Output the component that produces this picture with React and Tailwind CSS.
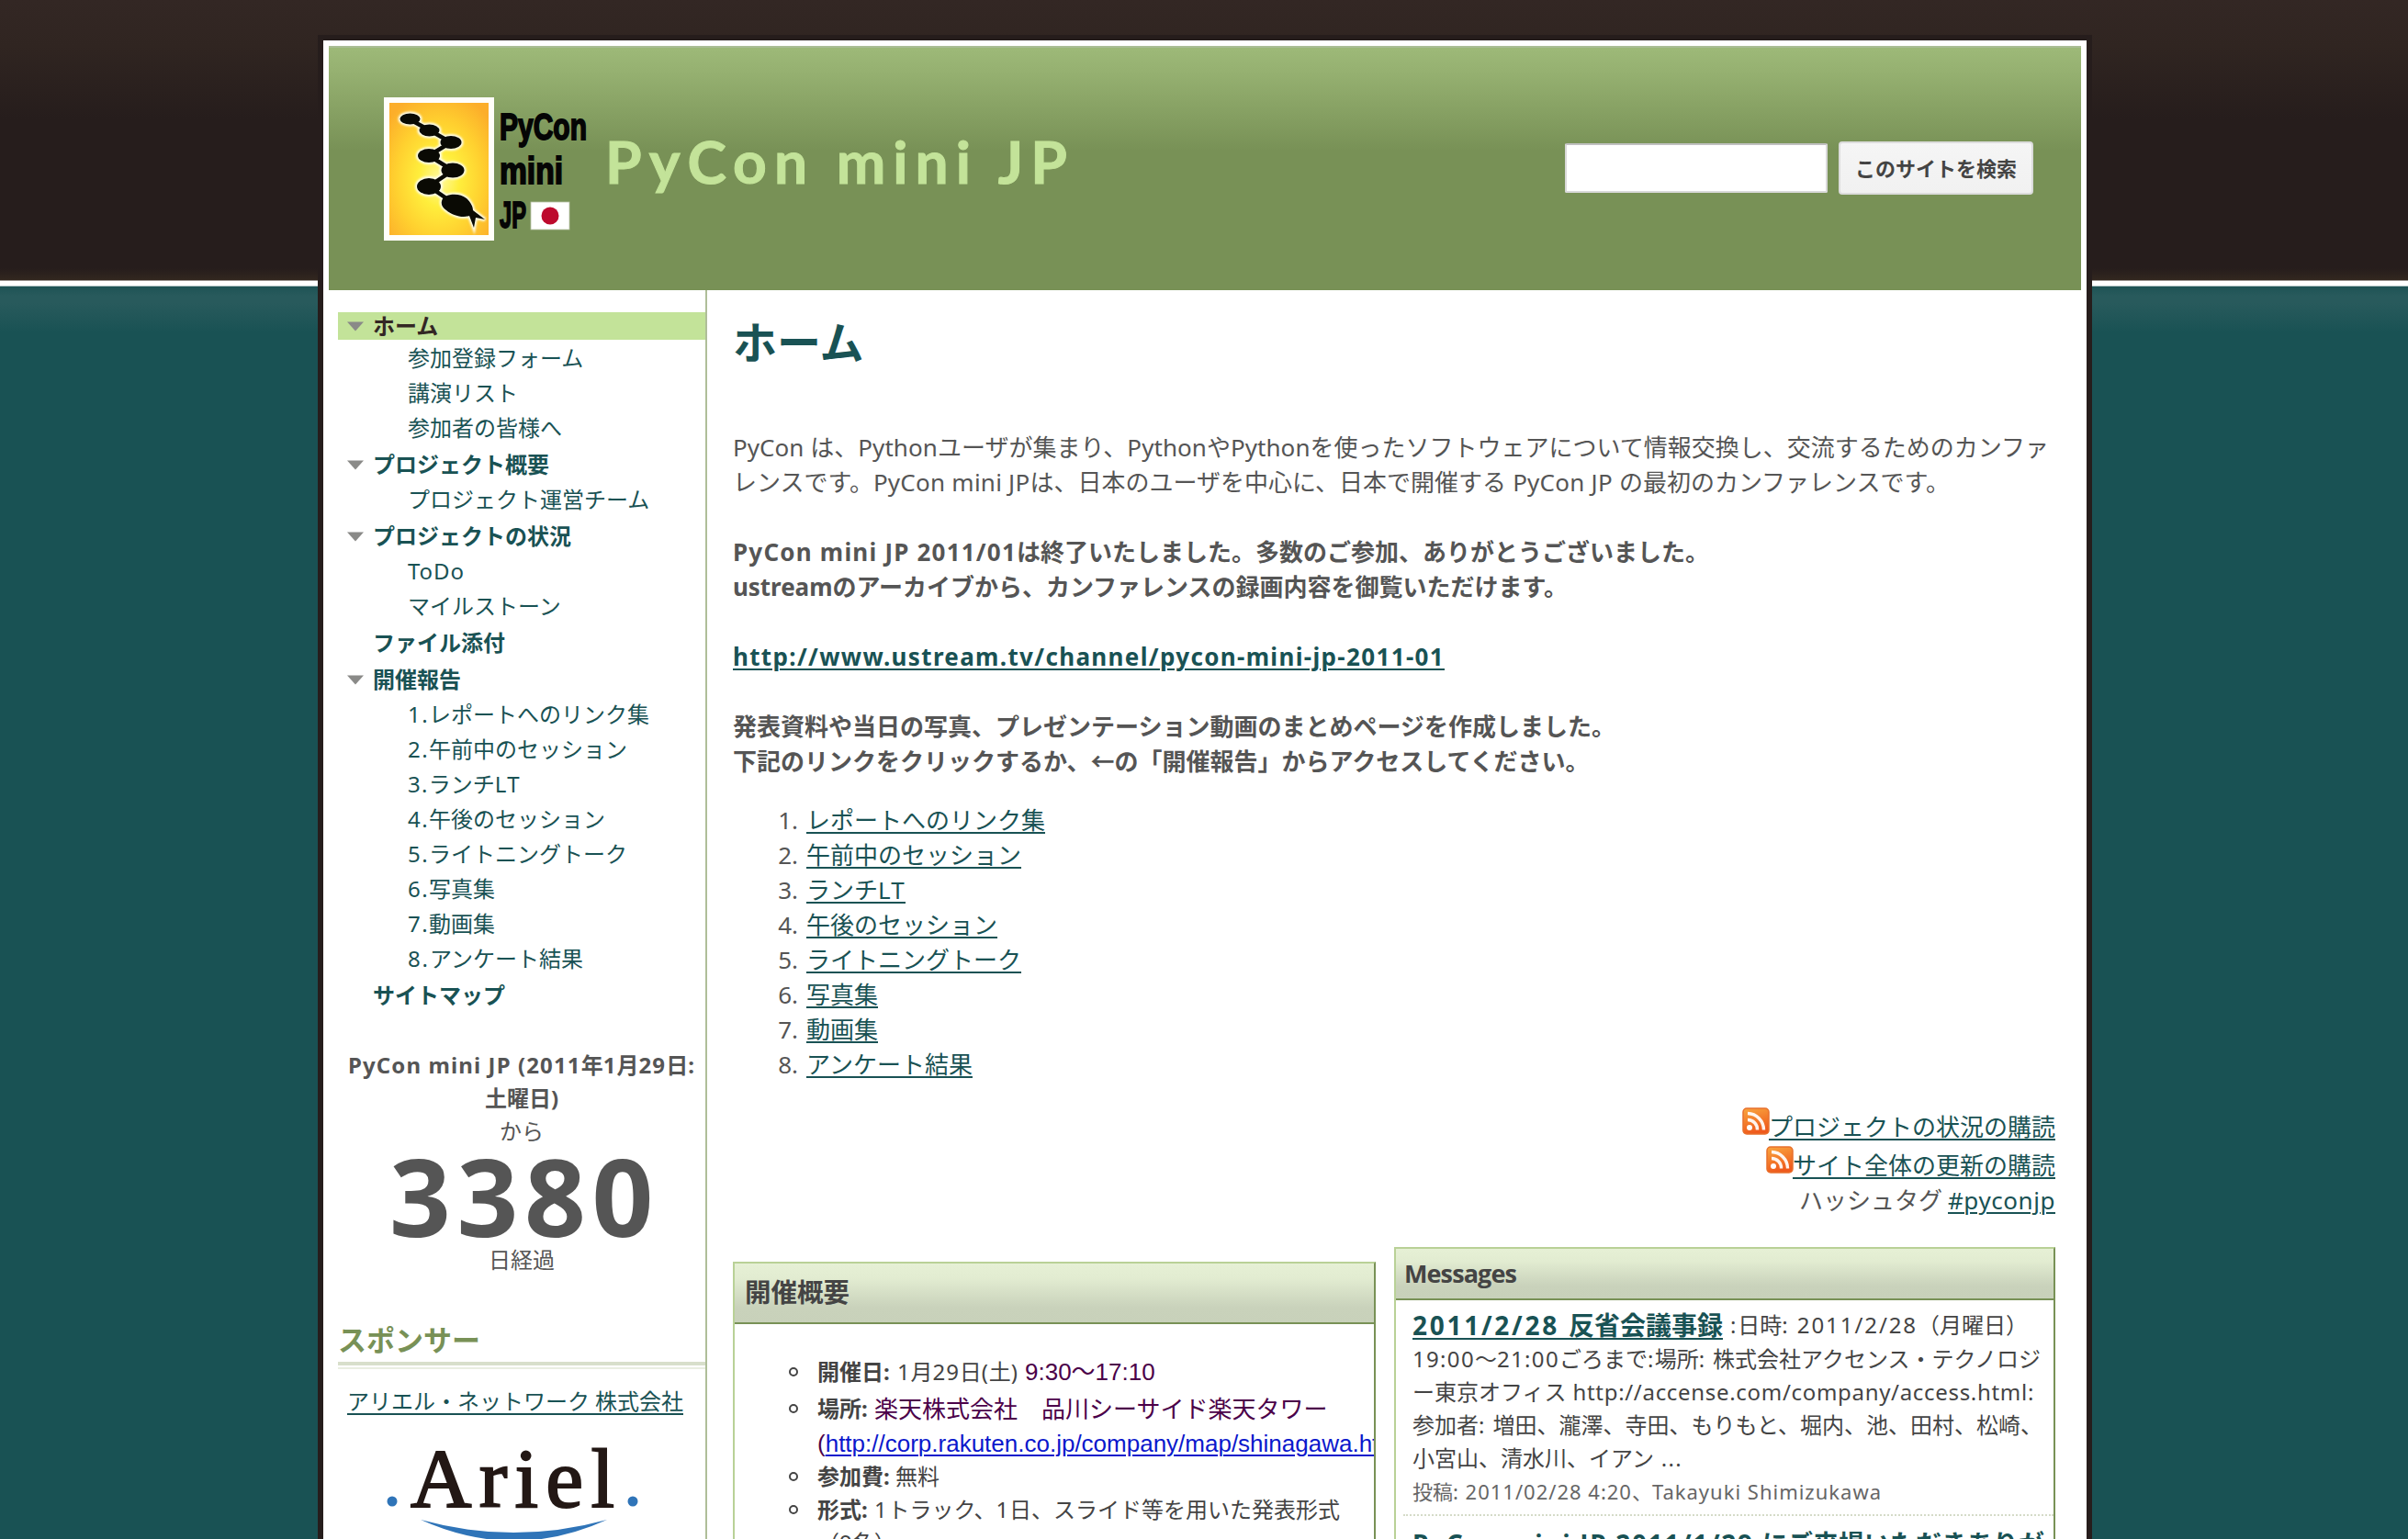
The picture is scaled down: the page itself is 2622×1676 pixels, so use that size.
import React, { useLayoutEffect, useRef, useState } from "react";

// A single line of text; with `w`, its Latin runs are tracked so the line takes that width.
function T({ w, className = "", children }) {
  const ref = useRef(null);
  const [ls, setLs] = useState(0);
  const text = String(children);
  const parts = text.split(/([\x20-\x7e]+)/).filter(Boolean);
  const isLatin = (s) => /^[\x20-\x7e]+$/.test(s);
  useLayoutEffect(() => {
    if (!w) return;
    const n = parts.filter(isLatin).join("").length;
    if (n) setLs((w - ref.current.getBoundingClientRect().width) / n);
  }, []);
  return (
    <span ref={ref} className={"whitespace-pre " + className}>
      {parts.map((p, i) =>
        isLatin(p) ? (
          <span key={i} style={{ letterSpacing: ls + "px" }}>{p}</span>
        ) : (
          <span key={i}>{p}</span>
        )
      )}
    </span>
  );
}

const NAV = [
  { t: "ホーム", active: true, open: true, kids: [["参加登録フォーム"], ["講演リスト"], ["参加者の皆様へ"]] },
  { t: "プロジェクト概要", open: true, kids: [["プロジェクト運営チーム"]] },
  { t: "プロジェクトの状況", open: true, kids: [["ToDo", 62], ["マイルストーン"]] },
  { t: "ファイル添付", kids: [] },
  {
    t: "開催報告",
    open: true,
    kids: [
      ["1.レポートへのリンク集", 263],
      ["2.午前中のセッション", 239],
      ["3.ランチLT", 123],
      ["4.午後のセッション", 215],
      ["5.ライトニングトーク", 239],
      ["6.写真集", 95],
      ["7.動画集", 95],
      ["8.アンケート結果", 191],
    ],
  },
  { t: "サイトマップ", kids: [] },
];

const LINKS = [
  "レポートへのリンク集",
  "午前中のセッション",
  "ランチLT",
  "午後のセッション",
  "ライトニングトーク",
  "写真集",
  "動画集",
  "アンケート結果",
];

const LINK = "text-[#195254] underline decoration-2 underline-offset-[3px]";

function Logo() {
  return (
    <svg className="ml-[60px] mt-[52px] h-[160px] w-[236px] shrink-0" viewBox="418 104 236 160">
      <defs>
        <radialGradient id="sun" cx="0.5" cy="0.58" r="0.68">
          <stop offset="0" stopColor="#fffaa0" />
          <stop offset="0.3" stopColor="#ffee3c" />
          <stop offset="0.65" stopColor="#ffd02f" />
          <stop offset="1" stopColor="#fcae2a" />
        </radialGradient>
        <filter id="glow" x="-20%" y="-20%" width="140%" height="140%">
          <feGaussianBlur stdDeviation="1.1" />
        </filter>
      </defs>
      <rect x="418" y="106" width="120" height="156" fill="#fffefa" />
      <rect x="424" y="112" width="108" height="144" fill="url(#sun)" />
      <g filter="url(#glow)" fill="#fffef0" stroke="#fffef0" strokeWidth="4">
        <SnakeShape line="#fffef0" lineWidth={8} />
      </g>
      <g fill="#0a0a04">
        <SnakeShape line="#0a0a04" lineWidth={4.5} />
      </g>
      <g fontFamily="'Liberation Sans'" fontWeight="700" fill="#050505" stroke="#050505" strokeWidth="1.8">
        <text x="544" y="152" fontSize="40" textLength="95" lengthAdjust="spacingAndGlyphs">PyCon</text>
        <text x="544" y="199.500" fontSize="40" textLength="69" lengthAdjust="spacingAndGlyphs">mini</text>
        <text x="544" y="247.500" fontSize="41" textLength="29" lengthAdjust="spacingAndGlyphs">JP</text>
      </g>
      <rect x="578" y="220" width="42" height="30" fill="#fff" stroke="#b9c4a8" strokeWidth="0.8" />
      <circle cx="599" cy="235" r="9.500" fill="#bd0a2d" />
    </svg>
  );
}

function SnakeShape({ line, lineWidth }) {
  return (
    <>
      <path
        d="M446 130 L468 142 L491 155 L467 169.500 L493 185.500 L467 203 L492 220"
        fill="none"
        stroke={line}
        strokeWidth={lineWidth}
      />
      <ellipse cx="446.500" cy="129.500" rx="11" ry="6" />
      <ellipse cx="467.500" cy="142" rx="11" ry="6.500" />
      <ellipse cx="491" cy="155" rx="11.500" ry="7" />
      <ellipse cx="467" cy="169.500" rx="12" ry="7.500" />
      <ellipse cx="493" cy="185.500" rx="12.500" ry="8" />
      <ellipse cx="467" cy="203" rx="13" ry="9" />
      <path d="M481 219 C482 211 500 209 508 216 C513 221 515 225 515 229 L528 239 L518 237 L516 248 L511 235 C503 238 492 234 486 229 C482 226 480 223 481 219 Z" />
    </>
  );
}

function Rss() {
  return (
    <svg className="-mt-[13px] mr-[-1px] h-[30px] w-[30px]" viewBox="0 0 30 30">
      <defs>
        <linearGradient id="rss" x1="0" y1="0" x2="0.300" y2="1">
          <stop offset="0" stopColor="#f9a63e" />
          <stop offset="1" stopColor="#ef5a1c" />
        </linearGradient>
      </defs>
      <rect x="1" y="1" width="28" height="28" rx="4" fill="url(#rss)" stroke="#e8702c" strokeWidth="1.500" />
      <circle cx="8" cy="22" r="3" fill="#fff" />
      <path d="M6 13.500 A10.500 10.500 0 0 1 16.500 24.500 M6 6.500 A18 18 0 0 1 23.500 24.500" fill="none" stroke="#fff" strokeWidth="3.400" opacity="0.920" />
    </svg>
  );
}

function Sidebar() {
  return (
    <aside className="h-[1360px] w-[412px] shrink-0 border-r-2 border-[#afbe99] pl-[10px] pt-6">
      <ul>
        {NAV.map((n) => (
          <li key={n.t}>
            <div
              className={
                "flex items-center pl-[10px] text-[24px] font-bold " +
                (n.active ? "mb-[2px] h-[30px] bg-[#c3e399] text-[#332724]" : "h-10 text-[#195254]")
              }
            >
              <div className="w-7">
                {n.open && (
                  <svg className="h-[11px] w-[18px]" viewBox="0 0 18 11">
                    <path d="M0 0.500 H18 L9 10.500 Z" fill="#8a8a88" />
                  </svg>
                )}
              </div>
              <T>{n.t}</T>
            </div>
            {n.kids.map(([k, w]) => (
              <div key={k} className="flex h-[38px] items-center pb-[2px] pl-[76px] text-[24px] text-[#195254]">
                <T w={w}>{k}</T>
              </div>
            ))}
          </li>
        ))}
      </ul>

      <div className="mt-[38px] flex w-[400px] flex-col items-center text-[24px] leading-9">
        <T w={378} className="font-bold">PyCon mini JP (2011年1月29日:</T>
        <T className="font-bold">土曜日)</T>
        <T>から</T>
        <div className="flex h-[104px] items-center pb-[2px] pl-[6px] text-[117px] font-bold leading-none">
          <T w={294}>3380</T>
        </div>
        <T>日経過</T>
      </div>

      <h2 className="mt-[45px] flex h-[48px] items-center text-[31px] font-bold text-[#789156]">スポンサー</h2>
      <div className="h-[8px] bg-[linear-gradient(to_bottom,#d8dfcb_0,#d8dfcb_4px,#fff_4px,#fff_6px,#e9eee1_6px,#e9eee1_8px)]" />
      <div className="mt-[17px] flex h-9 items-center pl-[10px] text-[24px]">
        <T w={366} className={LINK + " underline-offset-[4px]"}>アリエル・ネットワーク 株式会社</T>
      </div>
      <svg className="h-[133px] w-[400px]" viewBox="368 1543 400 133">
        <text x="447" y="1639.500" fontFamily="'Liberation Serif'" fontSize="92" fill="#231815" stroke="#231815" strokeWidth="2" textLength="222">Ariel</text>
        <circle cx="427" cy="1634" r="5.500" fill="#2f74b8" />
        <circle cx="689" cy="1634" r="5.500" fill="#2f74b8" />
        <path d="M458 1654 Q559 1682 661 1654 Q560 1700 458 1654 Z" fill="#2f74b8" />
      </svg>
    </aside>
  );
}

function Bullet({ className, children }) {
  return (
    <li className={"flex items-center " + className}>
      <div className="mr-[21px] h-[10px] w-[10px] rounded-full border-2 border-[#444]" />
      {children}
    </li>
  );
}

const BOX = "overflow-hidden border-2 border-b-0 border-l-[#b9d197] border-r-[#789156] border-t-[#b9d197] text-[#444]";
const BOX_HEAD =
  "flex items-center border-b-2 border-[#789156] font-bold bg-[linear-gradient(to_bottom,#e6f0d5_0,#e2ecd1_25%,#c9d2bb_75%,#c8d1ba_100%)]";

function Overview() {
  return (
    <section className={BOX + " mt-4 h-[304px] w-[700px]"}>
      <h3 className={BOX_HEAD + " h-[66px] pb-[2px] pl-[11px] text-[28.500px]"}>開催概要</h3>
      <ul className="w-[1000px] pl-[59px] pt-[32px] text-[24px]">
        <Bullet className="h-10">
          <T w={87} className="font-bold">開催日: </T>
          <T w={139}>1月29日(土) </T>
          <span className="font-['Liberation_Sans','Noto_Sans_CJK_JP',sans-serif] text-[26px] text-[#4b0049]">9:30〜17:10</span>
        </Bullet>
        <Bullet className="h-10">
          <T w={62} className="font-bold">場所: </T>
          <span className="text-[26px] text-[#4b0049]">楽天株式会社　品川シーサイド楽天タワー</span>
        </Bullet>
        <li className="flex h-[36px] items-center pl-[31px] font-['Liberation_Sans'] text-[26px] text-[#4b0049]">
          (<a className="text-[#0b18cc] underline decoration-2 underline-offset-[3px]">http://corp.rakuten.co.jp/company/map/shinagawa.html</a>)
        </li>
        <Bullet className="h-9">
          <T w={85} className="font-bold">参加費: </T>
          <T>無料</T>
        </Bullet>
        <Bullet className="h-9">
          <T w={62} className="font-bold">形式: </T>
          <T w={507}>1トラック、1日、スライド等を用いた発表形式</T>
        </Bullet>
        <li className="flex h-9 items-center pl-[31px]">（9名）</li>
      </ul>
    </section>
  );
}

function Messages() {
  return (
    <section className={BOX + " h-[320px] w-[720px]"}>
      <h3 className={BOX_HEAD + " h-[56px] pl-[9px] font-['Open_Sans'] text-[27px]"}>
        <T w={122}>Messages</T>
      </h3>
      <div className="ml-2 flex flex-col items-start border-b-2 border-dotted border-[#d5dbc8] pl-[10px] pt-[8px] text-[24px] leading-9">
        <div className="flex h-[38px] items-center">
          <T w={338} className={LINK + " text-[28px] font-bold"}>2011/2/28 反省会議事録</T>
          <T w={324} className="ml-2">:日時: 2011/2/28（月曜日）</T>
        </div>
        <T w={684}>19:00〜21:00ごろまで:場所: 株式会社アクセンス・テクノロジ</T>
        <T w={677}>ー東京オフィス http://accense.com/company/access.html:</T>
        <T w={686}>参加者: 増田、瀧澤、寺田、もりもと、堀内、池、田村、松崎、</T>
        <T w={294}>小宮山、清水川、イアン ...</T>
        <T w={511} className="h-[43px] text-[22px] text-[#666]">投稿: 2011/02/28 4:20、Takayuki Shimizukawa</T>
      </div>
      <div className="flex h-[60px] items-center pl-[18px] text-[28px]">
        <T w={688} className={LINK + " font-bold"}>PyCon mini JP 2011/1/29 にご来場いただきありが</T>
      </div>
    </section>
  );
}

function Main() {
  return (
    <main className="w-[1468px] pl-7 text-[26px] text-[#555]">
      <h1 className="mt-[37px] flex h-[40px] items-center text-[48px] font-bold text-[#195254]">ホーム</h1>
      <div className="mt-[75px] flex flex-col items-start leading-[38px]">
        <T w={1433}>PyCon は、Pythonユーザが集まり、PythonやPythonを使ったソフトウェアについて情報交換し、交流するためのカンファ</T>
        <T w={1325}>レンスです。PyCon mini JPは、日本のユーザを中心に、日本で開催する PyCon JP の最初のカンファレンスです。</T>
      </div>
      <div className="mt-[38px] flex flex-col items-start font-bold leading-[38px]">
        <T w={1063}>PyCon mini JP 2011/01は終了いたしました。多数のご参加、ありがとうございました。</T>
        <T w={909}>ustreamのアーカイブから、カンファレンスの録画内容を御覧いただけます。</T>
        <T w={775} className={LINK + " my-[38px]"}>http://www.ustream.tv/channel/pycon-mini-jp-2011-01</T>
        <T>発表資料や当日の写真、プレゼンテーション動画のまとめページを作成しました。</T>
        <T>下記のリンクをクリックするか、←の「開催報告」からアクセスしてください。</T>
      </div>
      <ol className="mt-[26px]">
        {LINKS.map((l, i) => (
          <li key={l} className="flex h-[38px] items-center">
            <span className="w-[80px] pr-[9px] text-right">{i + 1}.</span>
            <T w={l === "ランチLT" ? 108 : 0} className={LINK}>{l}</T>
          </li>
        ))}
      </ol>
      <div className="mt-[28px] flex w-[1440px] flex-col items-end">
        <div className="flex h-[42px] items-center">
          <Rss />
          <T className={LINK}>プロジェクトの状況の購読</T>
        </div>
        <div className="flex h-[42px] items-center">
          <Rss />
          <T className={LINK}>サイト全体の更新の購読</T>
        </div>
        <div className="flex h-[36px] items-center gap-[6px] pb-px">
          <T>ハッシュタグ</T>
          <T w={117} className={LINK}>#pyconjp</T>
        </div>
      </div>
      <div className="mt-[32px] flex w-[1440px] items-start justify-between">
        <Overview />
        <Messages />
      </div>
    </main>
  );
}

export default function App() {
  return (
    <div className="h-[1676px] w-[2622px] overflow-hidden bg-[#195254] bg-[linear-gradient(to_bottom,#332724_0,#302521_50px,#261d1c_130px,#261d1c_292px,#32271f_305px,#fff_306px,#fff_311px,#1e5355_312.500px,#285a5c_322px,#285a5c_330px,#195254_362px,#195254_100%)] pl-[346px] pt-[38px] font-['Noto_Sans','Noto_Sans_CJK_JP',sans-serif]">
      <div className="h-[1638px] w-[1932px] overflow-hidden border-x-[6px] border-t-[6px] border-[#261d1c] bg-white px-[6px] pt-[6px] text-[#555]">
        <header className="flex h-[266px] border-t-2 border-[#a9bd94] bg-[linear-gradient(to_bottom,#9db978_0,#96b171_25px,#789156_112px)]">
          <Logo />
          <div className="mt-[84px] w-[520px] pl-[5px] font-['Lato'] text-[64px] font-bold leading-[80px] text-[#c3e399] [-webkit-text-stroke:1px_#c3e399]">
            <T w={511}>PyCon mini JP</T>
          </div>
          <div className="ml-[530px] mt-[102px] flex h-[58px] items-center gap-3">
            <input className="h-[54px] w-[286px] rounded-[2px] border-2 border-[#d9d9d9] border-t-[#c0c0c0] bg-white" />
            <button className="h-[58px] w-[212px] rounded-[4px] border-2 border-[#dcdcdc] bg-[linear-gradient(to_bottom,#f5f5f5,#f1f1f1)] text-[22px] font-bold text-[#444]">
              このサイトを検索
            </button>
          </div>
        </header>
        <div className="flex">
          <Sidebar />
          <Main />
        </div>
      </div>
    </div>
  );
}
